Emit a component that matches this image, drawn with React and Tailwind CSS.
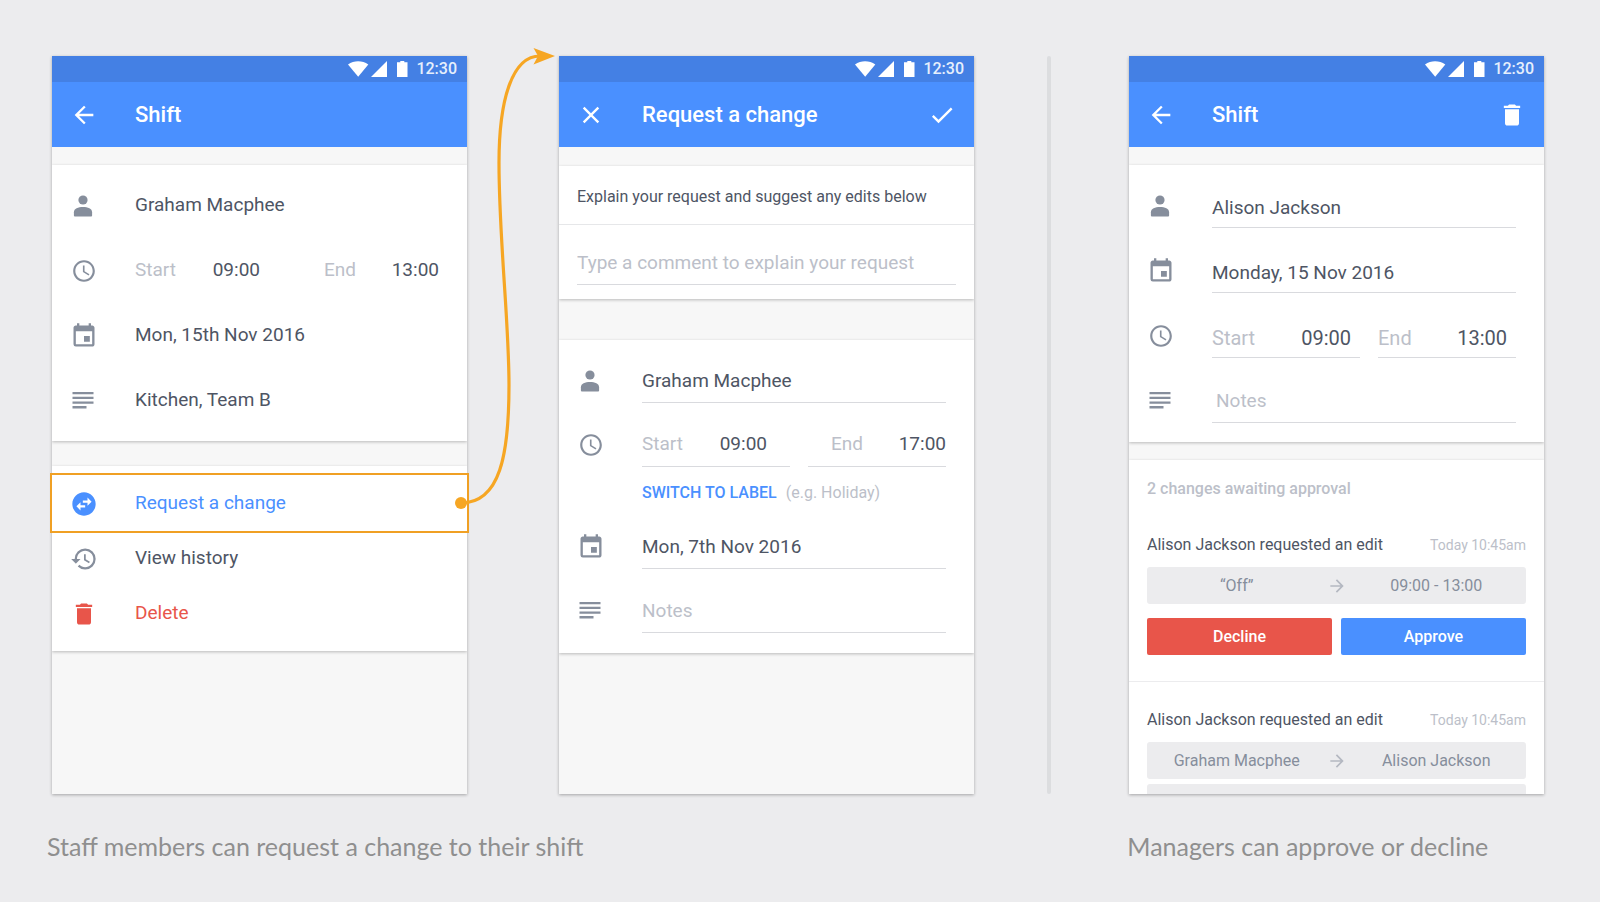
import React from 'react';
import {
  MdArrowBack,
  MdArrowForward,
  MdCheck,
  MdClose,
  MdDelete,
  MdEvent,
  MdHistory,
  MdSchedule,
  MdSwapHorizontalCircle,
} from 'react-icons/md';

const PersonIcon = () => (
  <svg className="w-7 h-7" viewBox="0 0 28 28" fill="currentColor" aria-hidden="true">
    <circle cx="13" cy="8" r="4.6" />
    <path d="M3.9 23.4v-3.2c0-3.7 4.3-5.2 9.1-5.2s9.1 1.5 9.1 5.2v3.2a1 1 0 0 1-1 1H4.9a1 1 0 0 1-1-1z" />
  </svg>
);

const NotesIcon = () => (
  <svg className="w-7 h-7" viewBox="0 0 28 28" fill="currentColor" aria-hidden="true">
    <path d="M2.5 5h21v2.3h-21zM2.5 9.7h21v2.3h-21zM2.5 14.4h21v2.3h-21zM2.5 19.1h14v2.3h-14z" />
  </svg>
);

const ClockIcon = () => <MdSchedule className="w-[26px] h-[26px]" />;

const StatusBar = () => (
  <div className="flex items-center justify-end h-[26px] pr-[10px] bg-[#4480e4] text-white">
    <svg className="w-[60px] h-4" viewBox="0 0 60 16" fill="currentColor" aria-hidden="true">
      <path d="M0 3.4C6-.9 14.3-.9 20.3 3.4L10.2 15.8z" />
      <path d="M39 0v16H23z" />
      <path d="M52.3 0h4v1.3H59.5V16H49V1.3h3.3z" />
    </svg>
    <span className="ml-2 text-base font-medium leading-none text-[#e6effc]">12:30</span>
  </div>
);

const AppBar = ({ title, leading, trailing }) => (
  <header className="flex items-center h-[65px] px-[18px] bg-[#4a90ff] text-white">
    {leading}
    <h2 className="ml-[37px] flex-1 text-[22px] font-medium">{title}</h2>
    {trailing}
  </header>
);

const IconButton = ({ label, children }) => (
  <button type="button" aria-label={label} className="flex w-7 h-7 items-center justify-center text-[28px]">
    {children}
  </button>
);

const Phone = ({ children }) => (
  <section className="aspect-[415/738] overflow-hidden bg-[#f7f7f7] shadow-[0_1px_3px_rgba(0,0,0,0.3)]">
    {children}
  </section>
);

const Card = ({ className = '', children }) => (
  <div className={`bg-white shadow-[0_1px_3px_rgba(0,0,0,0.25)] ${className}`}>{children}</div>
);

// Icon column + content column, shared by all the shift details
const Row = ({ icon, className = '', children }) => (
  <div className={`flex pl-[18px] ${className}`}>
    <div className="flex w-7 h-11 shrink-0 items-center justify-center text-[28px] text-[#868e9c]">{icon}</div>
    <div className="ml-[37px] mr-7 flex-1 min-w-0">{children}</div>
  </div>
);

const Field = ({ label, className = '', ...props }) => (
  <input
    type="text"
    aria-label={label}
    className={`block w-full h-11 border-b border-[#d9dade] text-[19px] text-[#4e5564] placeholder:text-[#bcbfc9] outline-none ${className}`}
    {...props}
  />
);

const TimeField = ({ id, label, value, className = '' }) => (
  <div className={`flex h-11 items-center justify-between border-b border-[#d9dade] ${className}`}>
    <label htmlFor={id} className="text-[#bcbfc9]">{label}</label>
    <input id={id} type="text" defaultValue={value} className="w-16 text-right text-[#4e5564] outline-none" />
  </div>
);

const actions = [
  { label: 'Request a change', icon: <MdSwapHorizontalCircle />, color: 'text-[#4a90ff]', iconColor: 'text-[#4a90ff]' },
  { label: 'View history', icon: <MdHistory />, color: 'text-[#4e5564]', iconColor: 'text-[#868e9c]' },
  { label: 'Delete', icon: <MdDelete />, color: 'text-[#e8554a]', iconColor: 'text-[#e8554a]' },
];

const ShiftScreen = () => (
  <>
    <AppBar title="Shift" leading={<IconButton label="Back"><MdArrowBack /></IconButton>} />
    <Card className="mt-[18px] py-2 text-[19px] text-[#4e5564]">
      <Row icon={<PersonIcon />} className="h-[65px] items-center">Graham Macphee</Row>
      <Row icon={<ClockIcon />} className="h-[65px] items-center">
        <div className="grid grid-cols-[148fr_138fr] gap-[18px]">
          <div className="flex justify-between pr-[23px]">
            <span className="text-[#bcbfc9]">Start</span>
            <span>09:00</span>
          </div>
          <div className="flex justify-between pl-[23px]">
            <span className="text-[#bcbfc9]">End</span>
            <span>13:00</span>
          </div>
        </div>
      </Row>
      <Row icon={<MdEvent />} className="h-[65px] items-center">Mon, 15th Nov 2016</Row>
      <Row icon={<NotesIcon />} className="h-[65px] items-center">Kitchen, Team B</Row>
    </Card>

    <Card className="mt-[25px] py-[10px]">
      {actions.map((action) => (
        <button
          key={action.label}
          type="button"
          className={`flex w-full h-[55px] items-center pl-[18px] text-[19px] ${action.color}`}
        >
          <span className={`text-[28px] ${action.iconColor}`}>{action.icon}</span>
          <span className="ml-[37px]">{action.label}</span>
        </button>
      ))}
    </Card>
  </>
);

const RequestScreen = () => (
  <>
    <AppBar
      title="Request a change"
      leading={<IconButton label="Close"><MdClose /></IconButton>}
      trailing={<IconButton label="Save"><MdCheck /></IconButton>}
    />
    <Card className="mt-[19px]">
      <label
        htmlFor="comment"
        className="flex h-[59px] items-center border-b border-[#e6e7e9] px-[18px] pt-[3px] text-base text-[#4e5564]"
      >
        Explain your request and suggest any edits below
      </label>
      <div className="px-[18px] pt-4 pb-[14px]">
        <Field id="comment" placeholder="Type a comment to explain your request" />
      </div>
    </Card>

    <Card className="mt-[41px] pt-[19px] pb-5 flex flex-col gap-5">
      <Row icon={<PersonIcon />}>
        <Field label="Name" defaultValue="Graham Macphee" />
      </Row>
      <Row icon={<ClockIcon />}>
        <div className="grid grid-cols-[148fr_138fr] gap-[18px] text-[19px]">
          <TimeField id="request-start" label="Start" value="09:00" className="pr-[23px]" />
          <TimeField id="request-end" label="End" value="17:00" className="pl-[23px]" />
        </div>
        <div className="flex pt-[14px] gap-[9px] text-base">
          <button type="button" className="font-medium text-[#4a90ff]">SWITCH TO LABEL</button>
          <span className="text-[#bcbfc9]">(e.g. Holiday)</span>
        </div>
      </Row>
      <Row icon={<MdEvent />}>
        <Field label="Date" defaultValue="Mon, 7th Nov 2016" />
      </Row>
      <Row icon={<NotesIcon />}>
        <Field label="Notes" placeholder="Notes" />
      </Row>
    </Card>
  </>
);

const Change = ({ from, to }) => (
  <div className="grid grid-cols-[1fr_20px_1fr] h-[37px] items-center rounded-[3px] bg-[#ececee] text-base text-[#868e9c] text-center">
    <span>{from}</span>
    {from && <MdArrowForward className="w-5 h-5 text-[#b4b8c1]" />}
    <span>{to}</span>
  </div>
);

const RequestHeading = () => (
  <div className="flex h-6 items-center justify-between">
    <h3 className="text-base text-[#4e5564]">Alison Jackson requested an edit</h3>
    <time className="text-sm text-[#bcbfc9]">Today 10:45am</time>
  </div>
);

const ApprovalScreen = () => (
  <>
    <AppBar
      title="Shift"
      leading={<IconButton label="Back"><MdArrowBack /></IconButton>}
      trailing={<IconButton label="Delete shift"><MdDelete /></IconButton>}
    />
    <Card className="mt-[18px] pt-[19px] pb-[19px] flex flex-col gap-[21px]">
      <Row icon={<PersonIcon />}>
        <Field label="Name" defaultValue="Alison Jackson" className="pt-[3px]" />
      </Row>
      <Row icon={<MdEvent />}>
        <Field label="Date" defaultValue="Monday, 15 Nov 2016" className="pt-[3px]" />
      </Row>
      <Row icon={<ClockIcon />}>
        <div className="grid grid-cols-[148fr_138fr] gap-[18px] text-[20px]">
          <TimeField id="shift-start" label="Start" value="09:00" className="pt-[5px] pr-[9px]" />
          <TimeField id="shift-end" label="End" value="13:00" className="pt-[5px] pr-[9px]" />
        </div>
      </Row>
      <Row icon={<NotesIcon />}>
        <Field label="Notes" placeholder="Notes" className="pl-1" />
      </Row>
    </Card>

    <Card className="mt-[18px]">
      <div className="px-[18px] pt-[17px] pb-[26px] border-b border-[#ececee]">
        <p className="h-6 text-base font-medium text-[#bcbfc9]">2 changes awaiting approval</p>
        <div className="mt-8">
          <RequestHeading />
        </div>
        <div className="mt-[10px]">
          <Change from="“Off”" to="09:00 - 13:00" />
        </div>
        <div className="mt-[14px] grid grid-cols-2 gap-[9px] text-base font-medium text-white">
          <button type="button" className="h-[37px] rounded-[2px] bg-[#e8554a]">Decline</button>
          <button type="button" className="h-[37px] rounded-[2px] bg-[#4a90ff]">Approve</button>
        </div>
      </div>
      <div className="px-[18px] pt-[26px]">
        <RequestHeading />
        <div className="mt-[10px] grid gap-[5px]">
          <Change from="Graham Macphee" to="Alison Jackson" />
          <Change />
        </div>
      </div>
    </Card>
  </>
);

// Runs from the highlighted action to the corner of the next screen
const Connector = () => (
  <svg className="absolute -top-4 -left-[17px] w-[120px] h-[480px] pointer-events-none" viewBox="450 40 120 480" aria-hidden="true">
    <path
      d="M461 503C500 503 509 455 509 385C509 320 499 240 499 163C499 100 512 56 540 56"
      fill="none"
      stroke="#f6a623"
      strokeWidth="3.2"
    />
    <circle cx="461" cy="503" r="6" fill="#f6a623" />
    <path d="M555 56L533.5 48L538 56L533.5 64.5z" fill="#f6a623" />
  </svg>
);

const App = () => (
  <main className="min-h-screen bg-[#ececee] pt-14 font-['Roboto',sans-serif]">
    <div className="grid grid-cols-[1fr_92px_1fr_73px_4px_78px_1fr] pl-[52px] pr-14">
      <div className="relative">
        <Phone>
          <StatusBar />
          <ShiftScreen />
        </Phone>
        <div className="absolute -inset-x-[2px] top-[417px] h-[60px] border-2 border-[#f0a024] pointer-events-none" />
      </div>
      <div className="relative">
        <Connector />
      </div>
      <Phone>
        <StatusBar />
        <RequestScreen />
      </Phone>
      <div />
      <div className="rounded-full bg-[#dcdddf]" />
      <div />
      <Phone>
        <StatusBar />
        <ApprovalScreen />
      </Phone>
    </div>
    <div className="grid grid-cols-[1fr_92px_1fr_73px_4px_78px_1fr] pl-[47px] pr-14 pt-[34px] font-['Lato',sans-serif] text-[25px] text-[#8f8f8f]">
      <p className="col-span-3">Staff members can request a change to their shift</p>
      <p className="col-start-7 whitespace-nowrap">Managers can approve or decline</p>
    </div>
  </main>
);

export default App;
